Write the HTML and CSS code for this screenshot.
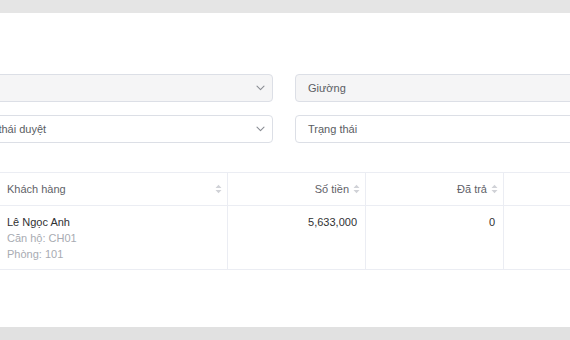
FILE: index.html
```html
<!DOCTYPE html>
<html lang="vi">

<head>
    <meta charset="UTF-8">
    <meta name="viewport" content="width=device-width, initial-scale=1.0">
    <title>Hợp đồng</title>
    <link rel="stylesheet" href="styles.css">
</head>

<body>

    <div class="top-bar"></div>

    <div class="card">
        <div class="content">
            <div class="filters">
                <div class="field field-disabled">
                    <span class="field-text"></span>
                    <svg class="chevron" width="9" height="6" viewBox="0 0 9 6"><path d="M1 1.2 L4.5 4.6 L8 1.2" fill="none" stroke="#8a8d94" stroke-width="1.1" stroke-linecap="round" stroke-linejoin="round"/></svg>
                </div>
                <div class="field field-disabled">
                    <span class="field-text">Giường</span>
                </div>
                <div class="field">
                    <span class="field-text">Trạng thái duyệt</span>
                    <svg class="chevron" width="9" height="6" viewBox="0 0 9 6"><path d="M1 1.2 L4.5 4.6 L8 1.2" fill="none" stroke="#8a8d94" stroke-width="1.1" stroke-linecap="round" stroke-linejoin="round"/></svg>
                </div>
                <div class="field">
                    <span class="field-text">Trạng thái</span>
                </div>
            </div>

            <table class="data-table">
                <colgroup>
                    <col class="col-customer">
                    <col class="col-money">
                    <col class="col-money">
                    <col class="col-rest">
                </colgroup>
                <tr>
                    <th>
                        <div class="th-inner th-left">
                            <span>Khách hàng</span>
                            <svg class="sort" width="7" height="10" viewBox="0 0 7 10"><path d="M0.5 4 L3.5 0.8 L6.5 4 Z M0.5 6 L3.5 9.2 L6.5 6 Z" fill="#d0d2d7"/></svg>
                        </div>
                    </th>
                    <th>
                        <div class="th-inner th-right">
                            <span>Số tiền</span>
                            <svg class="sort" width="7" height="10" viewBox="0 0 7 10"><path d="M0.5 4 L3.5 0.8 L6.5 4 Z M0.5 6 L3.5 9.2 L6.5 6 Z" fill="#d0d2d7"/></svg>
                        </div>
                    </th>
                    <th>
                        <div class="th-inner th-right">
                            <span>Đã trả</span>
                            <svg class="sort" width="7" height="10" viewBox="0 0 7 10"><path d="M0.5 4 L3.5 0.8 L6.5 4 Z M0.5 6 L3.5 9.2 L6.5 6 Z" fill="#d0d2d7"/></svg>
                        </div>
                    </th>
                    <th></th>
                </tr>
                <tr>
                    <td>
                        <div class="customer-name">Lê Ngọc Anh</div>
                        <div class="customer-meta">Căn hộ: CH01</div>
                        <div class="customer-meta">Phòng: 101</div>
                    </td>
                    <td class="num">5,633,000</td>
                    <td class="num">0</td>
                    <td></td>
                </tr>
            </table>
        </div>
    </div>

    <div class="bottom-bar"></div>

</body>

</html>
```

FILE: styles.css
```css
html,
body {
    overflow: hidden;
}

body {
    margin: 0;
    padding: 0;
    font-family: "Liberation Sans", Arial, sans-serif;
    font-size: 11px;
    color: #606266;
    background-color: #e3e3e3;
}

.top-bar {
    height: 13px;
    background-color: #e5e5e5;
}

.card {
    height: 314px;
    background-color: #fff;
    overflow: hidden;
}

.content {
    width: 660px;
    margin-left: -46px;
    padding-top: 61px;
}

.filters {
    display: grid;
    grid-template-columns: 319px 319px;
    column-gap: 22px;
    row-gap: 13px;
}

.field {
    height: 28px;
    box-sizing: border-box;
    border: 1px solid #dcdfe6;
    border-radius: 4px;
    background-color: #fff;
    display: flex;
    align-items: center;
    justify-content: space-between;
    padding: 0 7px 0 12px;
}

.field-disabled {
    background-color: #f5f5f6;
}

.field-text {
    color: #5a5d63;
    font-size: 11px;
}

.chevron {
    display: block;
}

/* bảng dữ liệu */
.data-table {
    margin-top: 29px;
    margin-left: 46px;
    width: 704px;
    table-layout: fixed;
    border-collapse: separate;
    border-spacing: 0;
}

.col-customer {
    width: 228px;
}

.col-money {
    width: 138px;
}

.col-rest {
    width: 200px;
}

th,
td {
    padding: 8px 8px 7px 8px;
    line-height: 16px;
    font-size: 11px;
    border-right: 1px solid #ebedf3;
    border-bottom: 1px solid #ebedf3;
    vertical-align: top;
    font-weight: normal;
}

td:first-child {
    padding-left: 7px;
}

th {
    border-top: 1px solid #ebedf3;
    color: #5f6268;
    padding: 8px 5px 8px 7px;
    height: 16px;
}

.th-inner {
    display: flex;
    align-items: center;
    gap: 4px;
}

.th-left {
    justify-content: space-between;
}

.th-right {
    justify-content: flex-end;
}

.sort {
    display: block;
}

.num {
    text-align: right;
    color: #303133;
}

.customer-name {
    color: #303133;
}

.customer-meta {
    color: #a8abb2;
}

.bottom-bar {
    height: 13px;
    background-color: #e1e1e1;
}
```
